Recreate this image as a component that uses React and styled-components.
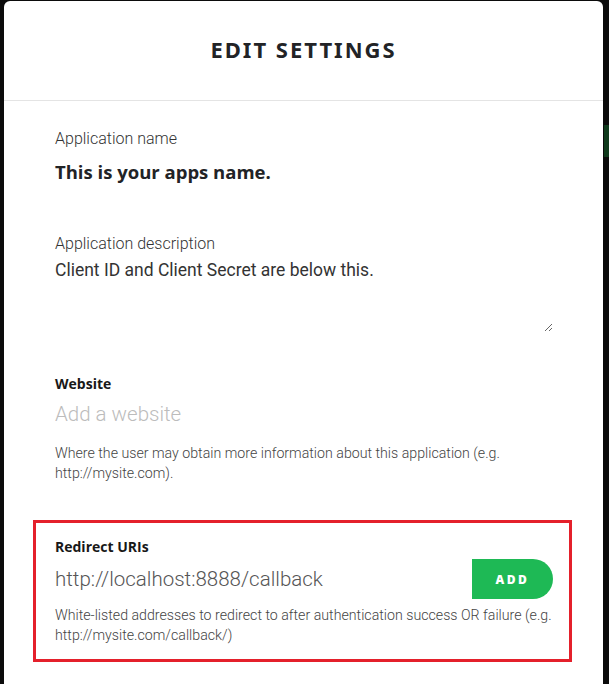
import React, { useState } from 'react';
import styled, { createGlobalStyle } from 'styled-components';

const GlobalStyle = createGlobalStyle`
  html, body {
    margin: 0;
    padding: 0;
    background: #0b0b0b;
  }
  body {
    font-family: Roboto, 'Liberation Sans', sans-serif;
    overflow: hidden;
  }
`;

const Backdrop = styled.div`
  width: 609px;
  height: 684px;
  background: #0b0b0b;
  padding: 1px 6px 0 4px;
  box-sizing: border-box;
  position: relative;
`;

const BehindButton = styled.div`
  position: absolute;
  right: 0;
  top: 125px;
  width: 5px;
  height: 32px;
  background: #0f3a1c;
`;

const Modal = styled.div`
  background: #fff;
  border-radius: 6px 6px 0 0;
  height: 100%;
`;

const Header = styled.header`
  height: 99px;
  display: flex;
  align-items: center;
  justify-content: center;
  border-bottom: 1px solid #e4e4e4;
`;

const Title = styled.h1`
  margin: 0 0 3px;
  font-family: 'Noto Sans', 'Open Sans', sans-serif;
  font-size: 22px;
  font-weight: 700;
  letter-spacing: 2px;
  color: #222326;
`;

const Body = styled.div`
  padding: 28px 51px 0 51px;
  display: flex;
  flex-direction: column;
`;

const Field = styled.div`
  display: flex;
  flex-direction: column;
  margin-bottom: ${p => p.gap || 0}px;
`;

const Label = styled.label`
  font-family: ${p => (p.bold ? "'Open Sans', sans-serif" : 'Roboto, sans-serif')};
  font-size: ${p => (p.bold ? 14 : 16)}px;
  font-weight: ${p => (p.bold ? 700 : 300)};
  color: ${p => (p.bold ? '#181818' : '#333')};
  line-height: 20px;
`;

const NameValue = styled.div`
  margin-top: 11px;
  font-family: 'Open Sans', sans-serif;
  font-size: 18.5px;
  font-weight: 700;
  color: #222326;
  line-height: 24px;
`;

const TextArea = styled.textarea`
  margin-top: 6px;
  border: none;
  outline: none;
  resize: vertical;
  font-family: Roboto, sans-serif;
  font-size: 17.5px;
  font-weight: 400;
  color: #333;
  height: 72px;
  padding: 0;
  width: 498px;
`;

const Input = styled.input`
  border: none;
  outline: none;
  font-family: Roboto, sans-serif;
  font-size: 20.5px;
  font-weight: 300;
  color: #555;
  padding: 0;
  flex: 1;
  min-width: 0;
  &::placeholder {
    color: #bcbcbc;
  }
`;

const InputRow = styled.div`
  display: flex;
  align-items: center;
  margin-top: ${p => p.top || 0}px;
  height: 40px;
`;

const Help = styled.p`
  margin: ${p => p.top || 8}px 0 0;
  font-size: 14.2px;
  font-weight: 300;
  color: #444;
  line-height: 20px;
`;

const Highlight = styled.div`
  margin: 0 -20px 0 -22px;
  padding: 14px 16px 14px 19px;
  border: 3px solid #e4202b;
`;

const AddButton = styled.button`
  width: 81px;
  height: 40px;
  border: none;
  border-radius: 0 20px 20px 0;
  background: #1eb955;
  color: #fff;
  font-family: 'Open Sans', sans-serif;
  font-size: 12px;
  font-weight: 800;
  letter-spacing: 2.5px;
  cursor: pointer;
`;

export default function App() {
  const [desc, setDesc] = useState('Client ID and Client Secret are below this.');
  const [site, setSite] = useState('');
  const [uri, setUri] = useState('http://localhost:8888/callback');

  return (
    <Backdrop>
      <GlobalStyle />
      <BehindButton />
      <Modal>
        <Header>
          <Title>EDIT SETTINGS</Title>
        </Header>
        <Body>
          <Field gap={50}>
            <Label>Application name</Label>
            <NameValue>This is your apps name.</NameValue>
          </Field>
          <Field gap={42}>
            <Label>Application description</Label>
            <TextArea value={desc} onChange={e => setDesc(e.target.value)} />
          </Field>
          <Field gap={37}>
            <Label bold>Website</Label>
            <InputRow>
              <Input
                placeholder="Add a website"
                value={site}
                onChange={e => setSite(e.target.value)}
              />
            </InputRow>
            <Help top={9}>
              Where the user may obtain more information about this application (e.g.
              http://mysite.com).
            </Help>
          </Field>
          <Highlight>
            <Label bold>Redirect URIs</Label>
            <InputRow top={2}>
              <Input value={uri} onChange={e => setUri(e.target.value)} />
              <AddButton type="button">ADD</AddButton>
            </InputRow>
            <Help top={6}>
              White-listed addresses to redirect to after authentication success OR failure (e.g.
              http://mysite.com/callback/)
            </Help>
          </Highlight>
        </Body>
      </Modal>
    </Backdrop>
  );
}
